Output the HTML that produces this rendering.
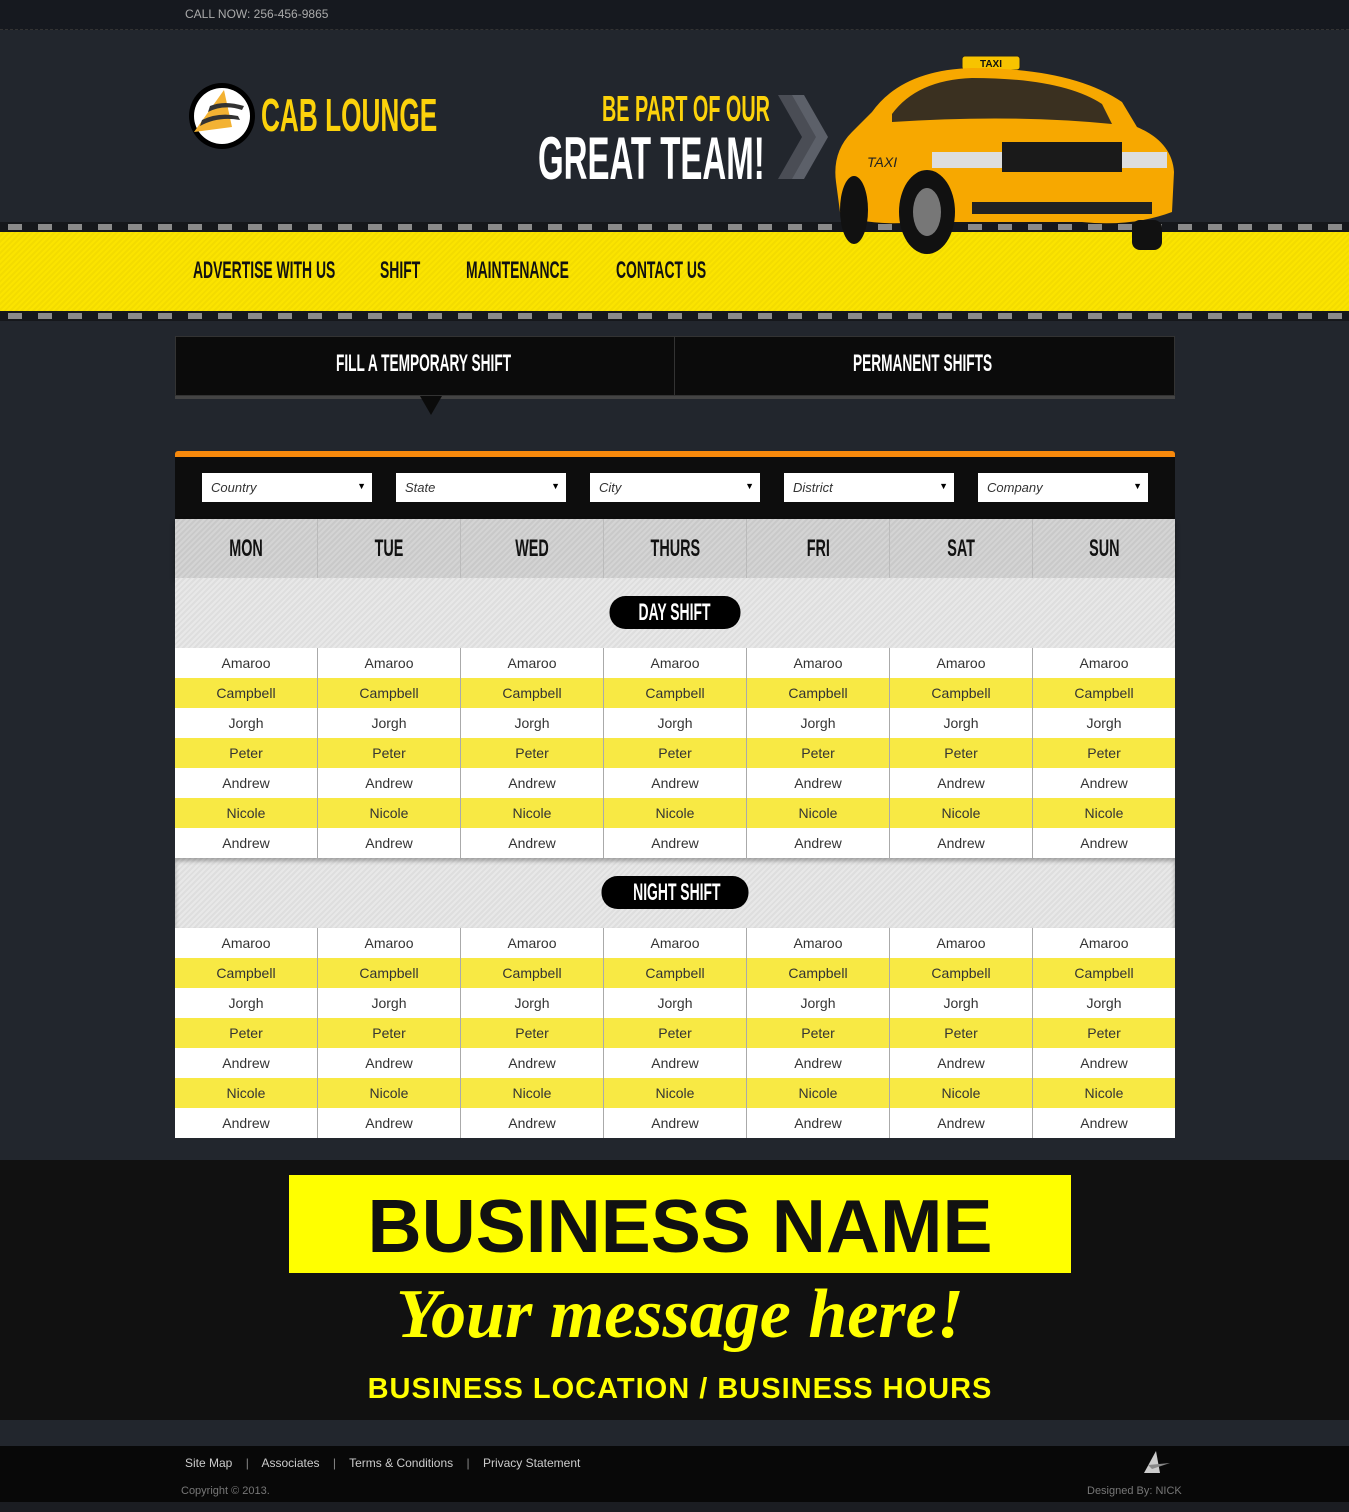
<!DOCTYPE html>
<html><head><meta charset="utf-8"><style>
*{margin:0;padding:0;box-sizing:border-box}
body{width:1349px;height:1512px;background:#22262d;font-family:"Liberation Sans",sans-serif;position:relative;overflow:hidden}
.abs{position:absolute}
.cond{font-family:"Liberation Sans",sans-serif;font-weight:bold;display:inline-block;transform:scaleX(0.62);transform-origin:left center;white-space:nowrap}
.dash{position:absolute;left:0;width:1349px;height:10px;background:#15171b repeating-linear-gradient(90deg,transparent 0 8px,#8a8a8a 8px 22px,transparent 22px 30px) 0 2px/1349px 6px no-repeat}
.nav>span{position:absolute;top:257px;font-size:24px;color:#111}
.sel{position:absolute;top:473px;width:170px;height:29px;background:#fff;font-size:13px;font-style:italic;color:#333;padding:7px 9px}
.sel:after{content:"▼";position:absolute;right:6px;top:8px;font-size:9px;font-style:normal;color:#000}
.grid{position:absolute;left:175px;width:1000px}
.row{display:flex;height:30px}
.row div{flex:1;border-right:1px solid #aaa;text-align:center;font-size:14px;line-height:30px;color:#333}
.row div:last-child{border-right:none}
.row.y{background:#f8e944}
.row.w{background:#fff}
.days{display:flex;height:59px;background:repeating-linear-gradient(135deg,#d4d4d4 0 2px,#c9c9c9 2px 4px);box-shadow:0 3px 5px rgba(0,0,0,.4)}
.days div{flex:1;border-right:1px solid #bbb;text-align:center;line-height:59px;font-size:24px;color:#111}
.days div span{transform:scaleX(.6);transform-origin:center}
.sec{height:70px;background:repeating-linear-gradient(135deg,#e8e8e8 0 2px,#dedede 2px 4px);position:relative}
.pill{position:absolute;left:50%;top:18px;transform:translateX(-50%);background:#000;color:#fff;border-radius:16px;height:33px;line-height:33px;text-align:center;font-size:24px}
.pill span{transform:scaleX(.58);transform-origin:center}
</style></head><body>
<div class="abs" style="left:0;top:0;width:1349px;height:30px;background:#16191f;border-bottom:1px dashed #333"></div>
<div class="abs" style="left:185px;top:7px;font-size:12px;color:#aaa">CALL NOW: 256-456-9865</div>

<svg class="abs" style="left:188px;top:82px" width="68" height="68" viewBox="0 0 68 68">
<circle cx="34" cy="34" r="33" fill="#000"/><circle cx="34" cy="34" r="28" fill="#fff"/>
<path d="M6 50 L36 8 L44 45 Z" fill="#f3b233"/>
<path d="M14 38 Q30 30 50 34 L52 38 Q30 34 12 44Z" fill="#333"/>
<path d="M22 24 Q36 18 56 24 L54 28 Q36 22 20 30Z" fill="#333"/>
</svg>
<div class="abs" style="left:261px;top:88px;font-size:46px;color:#fcd20b"><span class="cond" style="transform:scaleX(.57)">CAB LOUNGE</span></div>
<div class="abs" style="left:602px;top:88px;font-size:36px;color:#fcd20b"><span class="cond" style="transform:scaleX(.55)">BE PART OF OUR</span></div>
<div class="abs" style="left:538px;top:124px;font-size:60px;color:#fff"><span class="cond" style="transform:scaleX(.55)">GREAT TEAM!</span></div>
<svg class="abs" style="left:778px;top:95px" width="56" height="84"><path d="M0 0H24L48 42L24 84H0L24 42Z" fill="#4a4d55"/><path d="M14 0H26L50 42L26 84H14L38 42Z" fill="#5c6069"/></svg>

<div class="dash" style="top:222px"></div>
<div class="abs" style="left:0;top:232px;width:1349px;height:79px;background:repeating-linear-gradient(135deg,#fbe400 0 2px,#f3dc00 2px 4px)"></div>
<div class="dash" style="top:311px"></div>
<div class="nav">
<span style="left:193px"><span class="cond" style="transform:scaleX(.58)">ADVERTISE WITH US</span></span>
<span style="left:380px"><span class="cond" style="transform:scaleX(.58)">SHIFT</span></span>
<span style="left:466px"><span class="cond" style="transform:scaleX(.58)">MAINTENANCE</span></span>
<span style="left:616px"><span class="cond" style="transform:scaleX(.58)">CONTACT US</span></span>
</div>

<svg class="abs" style="left:832px;top:52px" width="345" height="205" viewBox="0 0 345 205">
<rect x="130" y="4" width="58" height="14" rx="3" fill="#f7c300" stroke="#222"/>
<text x="159" y="15" font-size="10" font-weight="bold" text-anchor="middle" fill="#111" font-family="Liberation Sans">TAXI</text>
<path d="M40 60 Q70 18 140 16 Q240 16 290 50 L305 75 Q340 90 342 120 L340 160 Q300 175 250 170 L90 170 Q30 175 8 160 L4 130 Q0 100 20 80Z" fill="#f7a800"/>
<path d="M60 62 Q85 28 140 26 Q230 26 270 52 L280 72 Q180 62 60 70Z" fill="#3a3020"/>
<path d="M170 90 H290 V120 H170Z" fill="#1a1a1a"/>
<rect x="100" y="100" width="70" height="16" fill="#ddd"/><rect x="290" y="100" width="45" height="16" fill="#ddd"/>
<path d="M140 150 H320 V162 H140Z" fill="#222"/>
<ellipse cx="95" cy="160" rx="28" ry="42" fill="#111"/><ellipse cx="95" cy="160" rx="14" ry="24" fill="#777"/>
<ellipse cx="22" cy="158" rx="14" ry="34" fill="#111"/>
<rect x="300" y="168" width="30" height="30" rx="8" fill="#111"/>
<text x="35" y="115" font-size="14" font-style="italic" fill="#222" font-family="Liberation Sans">TAXI</text>
</svg>

<div class="abs" style="left:175px;top:336px;width:1000px;height:60px;background:#0b0b0b;border:1px solid #333;box-shadow:0 3px 0 #444"></div>
<div class="abs" style="left:674px;top:337px;width:1px;height:58px;background:#333"></div>
<div class="abs" style="left:336px;top:350px;font-size:24px;color:#fff"><span class="cond" style="transform:scaleX(.57)">FILL A TEMPORARY SHIFT</span></div>
<div class="abs" style="left:853px;top:350px;font-size:24px;color:#fff"><span class="cond" style="transform:scaleX(.57)">PERMANENT SHIFTS</span></div>
<div class="abs" style="left:420px;top:396px;width:0;height:0;border-left:11px solid transparent;border-right:11px solid transparent;border-top:19px solid #0b0b0b"></div>

<div class="abs" style="left:175px;top:451px;width:1000px;height:68px;background:#0d0d0d;border-top:6px solid #f7890c;border-radius:3px 3px 0 0"></div>
<div class="sel" style="left:202px">Country</div>
<div class="sel" style="left:396px">State</div>
<div class="sel" style="left:590px">City</div>
<div class="sel" style="left:784px">District</div>
<div class="sel" style="left:978px">Company</div>

<div class="grid" style="top:519px">
<div class="days"><div><span class="cond">MON</span></div><div><span class="cond">TUE</span></div><div><span class="cond">WED</span></div><div><span class="cond">THURS</span></div><div><span class="cond">FRI</span></div><div><span class="cond">SAT</span></div><div style="border:none"><span class="cond">SUN</span></div></div>
<div class="sec"><div class="pill" style="width:131px"><span class="cond">DAY SHIFT</span></div></div>
<div class="row w"><div>Amaroo</div><div>Amaroo</div><div>Amaroo</div><div>Amaroo</div><div>Amaroo</div><div>Amaroo</div><div>Amaroo</div></div>
<div class="row y"><div>Campbell</div><div>Campbell</div><div>Campbell</div><div>Campbell</div><div>Campbell</div><div>Campbell</div><div>Campbell</div></div>
<div class="row w"><div>Jorgh</div><div>Jorgh</div><div>Jorgh</div><div>Jorgh</div><div>Jorgh</div><div>Jorgh</div><div>Jorgh</div></div>
<div class="row y"><div>Peter</div><div>Peter</div><div>Peter</div><div>Peter</div><div>Peter</div><div>Peter</div><div>Peter</div></div>
<div class="row w"><div>Andrew</div><div>Andrew</div><div>Andrew</div><div>Andrew</div><div>Andrew</div><div>Andrew</div><div>Andrew</div></div>
<div class="row y"><div>Nicole</div><div>Nicole</div><div>Nicole</div><div>Nicole</div><div>Nicole</div><div>Nicole</div><div>Nicole</div></div>
<div class="row w"><div>Andrew</div><div>Andrew</div><div>Andrew</div><div>Andrew</div><div>Andrew</div><div>Andrew</div><div>Andrew</div></div>
<div class="sec" style="box-shadow:inset 0 3px 4px rgba(0,0,0,.3)"><div class="pill" style="width:147px"><span class="cond">NIGHT SHIFT</span></div></div>
<div class="row w"><div>Amaroo</div><div>Amaroo</div><div>Amaroo</div><div>Amaroo</div><div>Amaroo</div><div>Amaroo</div><div>Amaroo</div></div>
<div class="row y"><div>Campbell</div><div>Campbell</div><div>Campbell</div><div>Campbell</div><div>Campbell</div><div>Campbell</div><div>Campbell</div></div>
<div class="row w"><div>Jorgh</div><div>Jorgh</div><div>Jorgh</div><div>Jorgh</div><div>Jorgh</div><div>Jorgh</div><div>Jorgh</div></div>
<div class="row y"><div>Peter</div><div>Peter</div><div>Peter</div><div>Peter</div><div>Peter</div><div>Peter</div><div>Peter</div></div>
<div class="row w"><div>Andrew</div><div>Andrew</div><div>Andrew</div><div>Andrew</div><div>Andrew</div><div>Andrew</div><div>Andrew</div></div>
<div class="row y"><div>Nicole</div><div>Nicole</div><div>Nicole</div><div>Nicole</div><div>Nicole</div><div>Nicole</div><div>Nicole</div></div>
<div class="row w"><div>Andrew</div><div>Andrew</div><div>Andrew</div><div>Andrew</div><div>Andrew</div><div>Andrew</div><div>Andrew</div></div>
</div>

<div class="abs" style="left:0;top:1160px;width:1349px;height:260px;background:#111"></div>
<div class="abs" style="left:289px;top:1175px;width:782px;height:98px;background:#ffff00;text-align:center;font-weight:bold;font-size:75px;line-height:102px;color:#111">BUSINESS NAME</div>
<div class="abs" style="left:289px;top:1275px;width:782px;text-align:center;font-family:'Liberation Serif',serif;font-style:italic;font-weight:bold;font-size:70px;color:#ffff00">Your message here!</div>
<div class="abs" style="left:289px;top:1373px;width:782px;text-align:center;font-weight:bold;font-size:29px;letter-spacing:1px;color:#ffff00">BUSINESS LOCATION / BUSINESS HOURS</div>

<div class="abs" style="left:0;top:1446px;width:1349px;height:56px;background:#080808"></div>
<div class="abs" style="left:0;top:1502px;width:1349px;height:10px;background:#1b1d22"></div>
<div class="abs" style="left:185px;top:1456px;font-size:12px;color:#ccc">Site Map &nbsp;&nbsp;&nbsp;<span style="color:#888">|</span>&nbsp;&nbsp;&nbsp; Associates &nbsp;&nbsp;&nbsp;<span style="color:#888">|</span>&nbsp;&nbsp;&nbsp; Terms &amp; Conditions &nbsp;&nbsp;&nbsp;<span style="color:#888">|</span>&nbsp;&nbsp;&nbsp; Privacy Statement</div>
<div class="abs" style="left:181px;top:1485px;font-size:11px;color:#777">Copyright © 2013.</div>
<div class="abs" style="left:1087px;top:1485px;font-size:11px;color:#777">Designed By: NICK</div>
<svg class="abs" style="left:1144px;top:1451px" width="28" height="22"><path d="M0 22L12 0L16 22Z" fill="#ccc"/><path d="M4 14L26 12L8 18Z" fill="#888"/></svg>
</body></html>
